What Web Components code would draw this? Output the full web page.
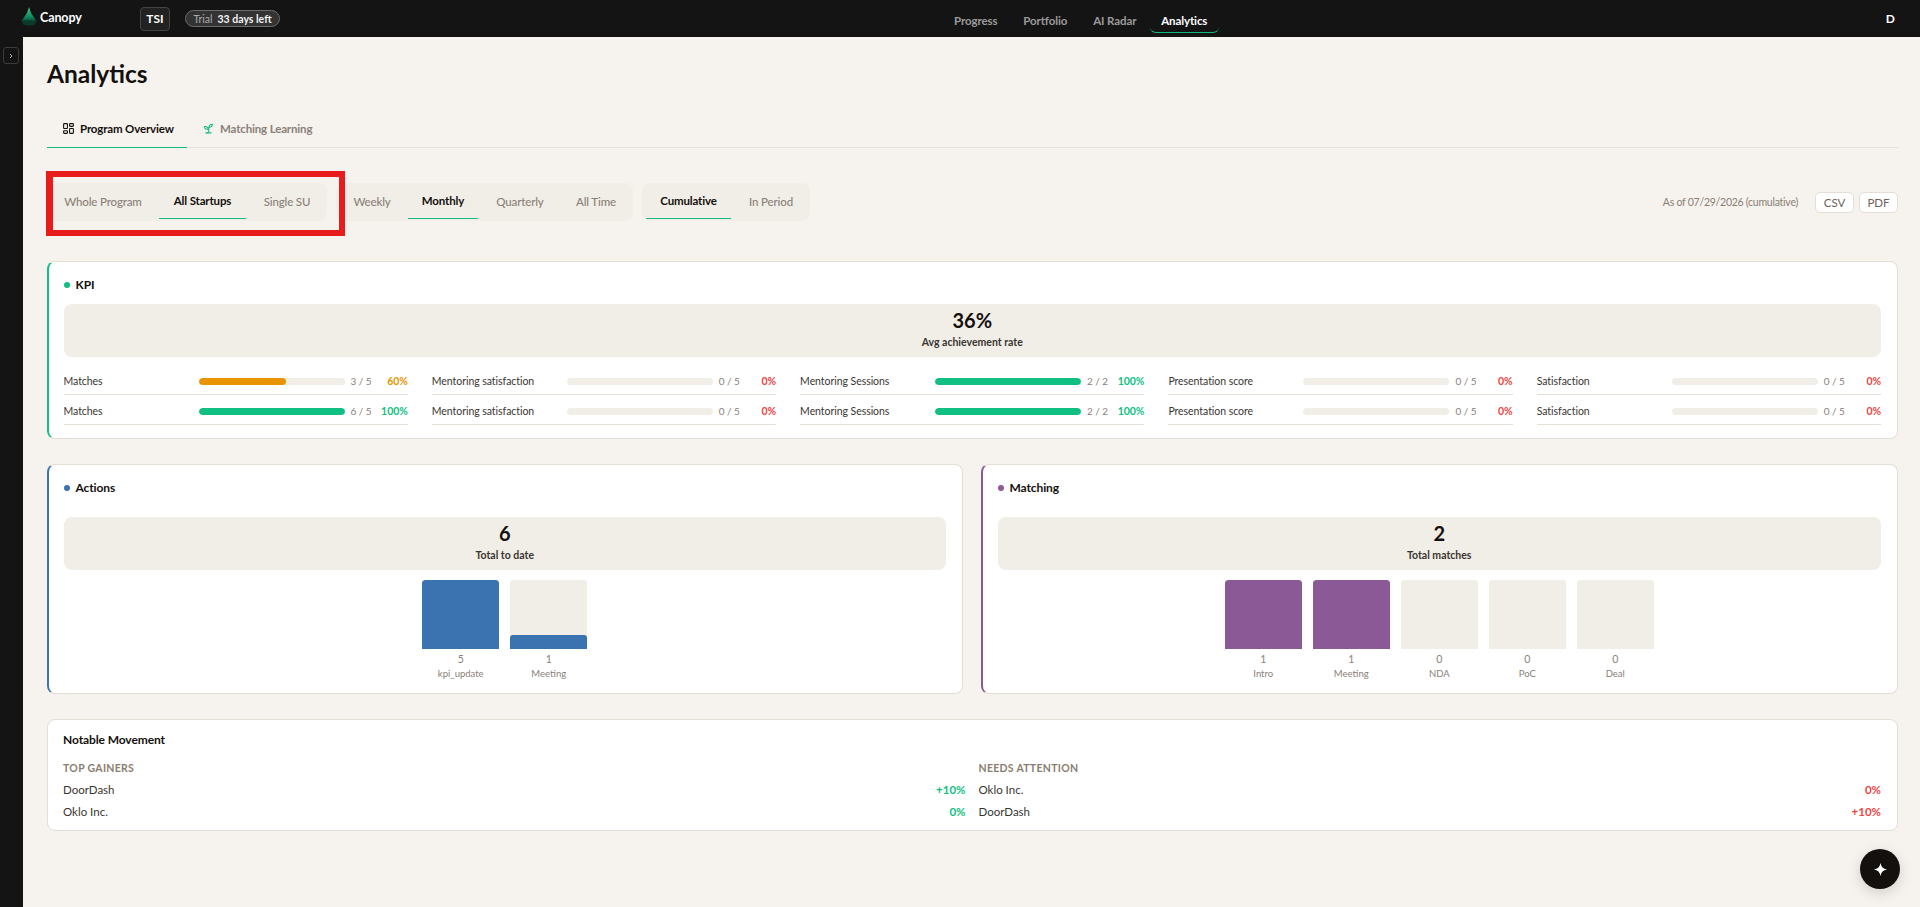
<!DOCTYPE html>
<html lang="en">
<head>
<meta charset="utf-8">
<title>Analytics</title>
<style>
  html, body { margin: 0; height: 100%; overflow: hidden; }
  body { font-family: "Lato", "Noto Sans", sans-serif; background: #141414; color: #14100d; }
</style>
</head>
<body>
<app-shell>
  <top-bar></top-bar>
  <side-rail></side-rail>
  <analytics-page></analytics-page>
  <ai-fab></ai-fab>
</app-shell>

<script>
// top level layout
class AppShell extends HTMLElement {
  constructor() {
    super();
    const shadow = this.attachShadow({ mode: "open" });
    shadow.innerHTML = `
      <style>
        :host { display: grid; grid-template-columns: 23px 1fr; grid-template-rows: 37px 870px; height: 907px; position: relative; }
        ::slotted(top-bar) { grid-column: 1 / 3; }
      </style>
      <slot></slot>
    `;
  }
}
customElements.define("app-shell", AppShell);

class TopBar extends HTMLElement {
  constructor() {
    super();
    const shadow = this.attachShadow({ mode: "open" });
    shadow.innerHTML = `
      <style>
        :host { display: flex; align-items: center; background: #141414; color: #fff; height: 37px; }
        .left { display: flex; align-items: center; padding-left: 21px; box-sizing: border-box; flex: 0 0 941px; }
        .logo { display: block; width: 16px; height: 19px; margin-top: -4px; }
        .name { font-size: 12.5px; font-weight: 700; margin: -3px 0 0 3px; width: 100px; letter-spacing: -0.1px; }
        .org { box-sizing: border-box; width: 30px; height: 24px; border: 1px solid #444; border-radius: 4px; background: #222; font-size: 12px; font-weight: 700; display: flex; align-items: center; justify-content: center; }
        .trial { box-sizing: border-box; margin-left: 15px; height: 17px; width: 95px; border: 1px solid #6b6b6b; border-radius: 9px; background: #333; font-size: 10.5px; display: flex; align-items: center; justify-content: center; gap: 5px; color: #aaa; }
        .trial b { color: #f2f2f2; font-weight: 700; }
        nav { display: flex; }
        .link { box-sizing: border-box; width: 69.5px; height: 29px; display: flex; align-items: center; justify-content: center; padding-top: 5px; margin-top: -1px; font-size: 11.5px; font-weight: 700; letter-spacing: -0.1px; color: #9b9b9b; }
        .link.on { color: #fff; border-bottom: 1.5px solid #10b981; border-radius: 0 0 6px 6px; }
        .right { margin-left: auto; padding-right: 25px; font-size: 12px; font-weight: 700; }
      </style>
      <div class="left">
        <svg class="logo" viewBox="0 0 16 19">
          <defs><linearGradient id="g" x1="0" y1="0" x2="0" y2="1">
            <stop offset="0" stop-color="#3fd08f"/><stop offset="0.7" stop-color="#0f8a5c"/><stop offset="1" stop-color="#0a4f38"/>
          </linearGradient></defs>
          <path d="M8 0 L10 6 L15.5 14 L0.5 14 L6 6 Z" fill="url(#g)"/>
          <path d="M0.5 13.5 H15.5 L14 17.5 Q8 19.6 2 17.5 Z" fill="#0b3a2a"/>
        </svg>
        <span class="name">Canopy</span>
        <span class="org">TSI</span>
        <span class="trial">Trial <b>33 days left</b></span>
      </div>
      <nav>
        <span class="link">Progress</span>
        <span class="link">Portfolio</span>
        <span class="link">AI Radar</span>
        <span class="link on">Analytics</span>
      </nav>
      <div class="right">D</div>
    `;
  }
}
customElements.define("top-bar", TopBar);

class SideRail extends HTMLElement {
  constructor() {
    super();
    const shadow = this.attachShadow({ mode: "open" });
    shadow.innerHTML = `
      <style>
        :host { display: block; background: #141414; padding: 10px 0 0 3px; }
        button { display: flex; align-items: center; justify-content: center; box-sizing: border-box; width: 16px; height: 17px; padding: 0; border: 1px solid #3c3c3c; border-radius: 3px; background: transparent; }
        svg { width: 6px; height: 6px; }
      </style>
      <button><svg viewBox="0 0 6 6" fill="none" stroke="#aaa" stroke-width="1"><path d="M2 1l2 2-2 2"/></svg></button>
    `;
  }
}
customElements.define("side-rail", SideRail);

// page content, built out of the smaller elements below
class AnalyticsPage extends HTMLElement {
  constructor() {
    super();
    const shadow = this.attachShadow({ mode: "open" });
    const row1 = [["Matches", 60, "3 / 5", "60%", "#e89400", "#e89400"], ["Mentoring satisfaction", 0, "0 / 5", "0%", "", "#ef4444"], ["Mentoring Sessions", 100, "2 / 2", "100%", "#10bf82", "#10bf82"], ["Presentation score", 0, "0 / 5", "0%", "", "#ef4444"], ["Satisfaction", 0, "0 / 5", "0%", "", "#ef4444"]];
    const row2 = [["Matches", 100, "6 / 5", "100%", "#10bf82", "#10bf82"], ["Mentoring satisfaction", 0, "0 / 5", "0%", "", "#ef4444"], ["Mentoring Sessions", 100, "2 / 2", "100%", "#10bf82", "#10bf82"], ["Presentation score", 0, "0 / 5", "0%", "", "#ef4444"], ["Satisfaction", 0, "0 / 5", "0%", "", "#ef4444"]];
    const kpi = r => `<kpi-row label="${r[0]}" fill="${r[1]}" val="${r[2]}" pct="${r[3]}" color="${r[4]}" pct-color="${r[5]}"></kpi-row>`;
    const kpiRows = row1.map(kpi).join("") + row2.map(kpi).join("");
    shadow.innerHTML = `
      <style>
        :host { display: block; background: #f6f3ee; padding: 21px 22px 0 24px; min-width: 0; overflow: hidden; }
        h1 { margin: 0; font-size: 24.5px; line-height: 32px; font-weight: 700; color: #14100d; }
        .controls { position: relative; display: flex; align-items: center; gap: 9px; margin-top: 35px; }
        .meta { margin-left: auto; display: flex; align-items: center; font-size: 10.5px; letter-spacing: -0.25px; color: #8a7d70; }
        .btn { box-sizing: border-box; height: 21px; width: 39px; background: #fff; border: 1px solid #e4ded4; border-radius: 5px; font-size: 11.5px; letter-spacing: 0; color: #6b6258; display: flex; align-items: center; justify-content: center; margin-left: 5px; }
        .btn.first { margin-left: 17px; }
        .redbox { position: absolute; left: -1px; top: -12px; width: 299px; height: 65px; box-sizing: border-box; border: 6px solid #e81c1c; border-left-width: 7px; }
        .kpis { display: grid; grid-template-columns: repeat(5, 1fr); column-gap: 24px; margin-top: 8px; }
        .two { display: grid; grid-template-columns: 916px 917px; column-gap: 18px; margin-top: 25px; }
        .bars { display: flex; justify-content: center; gap: 11px; margin-top: 10px; }
        .first-card { margin-top: 40px; }
        .movers { display: grid; grid-template-columns: 1fr 1fr; column-gap: 13px; margin-top: 13px; }
      </style>
      <h1>Analytics</h1>
      <tab-strip></tab-strip>
      <div class="controls">
        <seg-group items="Whole Program|All Startups|Single SU" active="1" widths="104|87|74"></seg-group>
        <seg-group items="Weekly|Monthly|Quarterly|All Time" active="1" widths="64|70|76|68"></seg-group>
        <seg-group items="Cumulative|In Period" active="0" widths="85|72"></seg-group>
        <div class="meta">
          <span>As of 07/29/2026 (cumulative)</span>
          <span class="btn first">CSV</span>
          <span class="btn">PDF</span>
        </div>
        <div class="redbox"></div>
      </div>

      <kpi-card class="first-card" accent="#10bf82" heading="KPI" gap="11">
        <stat-box value="36%" label="Avg achievement rate"></stat-box>
        <div class="kpis">${kpiRows}</div>
      </kpi-card>

      <div class="two">
        <kpi-card accent="#3b72b0" heading="Actions" gap="21">
          <stat-box value="6" label="Total to date"></stat-box>
          <div class="bars">
            <chart-bar fill="100" color="#3b72b0" val="5" label="kpi_update"></chart-bar>
            <chart-bar fill="20" color="#3b72b0" val="1" label="Meeting"></chart-bar>
          </div>
        </kpi-card>
        <kpi-card accent="#8b5a96" heading="Matching" gap="21">
          <stat-box value="2" label="Total matches"></stat-box>
          <div class="bars">
            <chart-bar fill="100" color="#8b5a96" val="1" label="Intro"></chart-bar>
            <chart-bar fill="100" color="#8b5a96" val="1" label="Meeting"></chart-bar>
            <chart-bar fill="0" color="#8b5a96" val="0" label="NDA"></chart-bar>
            <chart-bar fill="0" color="#8b5a96" val="0" label="PoC"></chart-bar>
            <chart-bar fill="0" color="#8b5a96" val="0" label="Deal"></chart-bar>
          </div>
        </kpi-card>
      </div>

      <kpi-card heading="Notable Movement" plain gap="0" style="margin-top:25px">
        <div class="movers">
          <mover-list heading="TOP GAINERS" rows="DoorDash:+10%:#10bf82|Oklo Inc.:0%:#10bf82"></mover-list>
          <mover-list heading="NEEDS ATTENTION" rows="Oklo Inc.:0%:#ef4444|DoorDash:+10%:#ef4444"></mover-list>
        </div>
      </kpi-card>
    `;
  }
}

class TabStrip extends HTMLElement {
  constructor() {
    super();
    const shadow = this.attachShadow({ mode: "open" });
    shadow.innerHTML = `
      <style>
        :host { display: flex; margin-top: 19px; border-bottom: 1px solid #e6e0d6; height: 38px; font-size: 11.5px; font-weight: 700; letter-spacing: -0.15px; }
        .tab { display: flex; align-items: center; gap: 5px; box-sizing: border-box; height: 39px; }
        .tab.on { width: 140px; padding-left: 15px; color: #14100d; border-bottom: 1.5px solid #10b981; }
        .tab.off { padding-left: 15px; color: #8a8078; }
        svg { width: 13px; height: 13px; fill: none; stroke-width: 2; stroke-linecap: round; stroke-linejoin: round; }
      </style>
      <div class="tab on">
        <svg viewBox="0 0 24 24" stroke="#14100d"><rect x="3" y="3" width="7" height="9" rx="1"/><rect x="14" y="3" width="7" height="5" rx="1"/><rect x="14" y="12" width="7" height="9" rx="1"/><rect x="3" y="16" width="7" height="5" rx="1"/></svg>
        Program Overview
      </div>
      <div class="tab off">
        <svg viewBox="0 0 24 24" stroke="#10b981"><path d="M7 20h10"/><path d="M10 20c5.5-2.5.8-6.4 3-10"/><path d="M9.5 9.4c1.1.8 1.8 2.2 2.3 3.7-2 .4-3.5.4-4.8-.3-1.2-.6-2.3-1.9-3-4.2 2.8-.5 4.4 0 5.5.8z"/><path d="M14.1 6a7 7 0 0 0-1.1 4c1.9-.1 3.3-.6 4.3-1.4 1-1 1.6-2.3 1.7-4.6-2.7.1-4 1-4.9 2z"/></svg>
        Matching Learning
      </div>
    `;
  }
}

class SegGroup extends HTMLElement {
  constructor() {
    super();
    const shadow = this.attachShadow({ mode: "open" });
    const items = this.getAttribute("items").split("|");
    const widths = this.getAttribute("widths").split("|");
    const active = Number(this.getAttribute("active"));
    shadow.innerHTML = `
      <style>
        :host { display: flex; gap: 4px; padding: 0 3px 0 4px; height: 38px; background: #f1eee7; border-radius: 8px; font-size: 11.5px; font-weight: 500; letter-spacing: -0.15px; color: #8a8078; }
        .item { box-sizing: border-box; height: 36px; display: flex; align-items: center; justify-content: center; white-space: nowrap; }
        .item.on { color: #14100d; font-weight: 700; border-bottom: 1.5px solid #10bf82; }
      </style>
      ${items.map((t, i) => `<div class="item${i === active ? " on" : ""}" style="width:${widths[i]}px">${t}</div>`).join("")}
    `;
  }
}

class KpiCard extends HTMLElement {
  constructor() {
    super();
    const shadow = this.attachShadow({ mode: "open" });
    const accent = this.getAttribute("accent");
    const plain = this.hasAttribute("plain");
    shadow.innerHTML = `
      <style>
        :host { display: block; box-sizing: border-box; background: #fff; border: 1px solid #e4ded4; border-radius: 8px; ${plain ? "padding: 12px 16px 8px 15px;" : `border-left: 2.5px solid ${accent}; padding: 15px 16px 13px 14.5px;`} }
        .head { display: flex; align-items: center; gap: 6px; font-size: 12px; font-weight: 700; line-height: 16px; letter-spacing: -0.1px; color: #14100d; }
        .dot { width: 6px; height: 6px; border-radius: 50%; background: ${accent}; }
        .body { margin-top: ${this.getAttribute("gap")}px; }
      </style>
      <div class="head">${plain ? "" : '<span class="dot"></span>'}${this.getAttribute("heading")}</div>
      <div class="body"><slot></slot></div>
    `;
  }
}

class StatBox extends HTMLElement {
  constructor() {
    super();
    const shadow = this.attachShadow({ mode: "open" });
    shadow.innerHTML = `
      <style>
        :host { display: block; box-sizing: border-box; height: 53px; background: #f1eee7; border-radius: 8px; text-align: center; padding-top: 4px; color: #14100d; }
        .v { font-size: 20px; font-weight: 700; line-height: 24px; }
        .l { font-size: 10.5px; font-weight: 700; line-height: 14px; margin-top: 3px; color: #3a3530; }
      </style>
      <div class="v">${this.getAttribute("value")}</div>
      <div class="l">${this.getAttribute("label")}</div>
    `;
  }
}

class KpiRow extends HTMLElement {
  constructor() {
    super();
    const shadow = this.attachShadow({ mode: "open" });
    const color = this.getAttribute("color");
    shadow.innerHTML = `
      <style>
        :host { display: grid; grid-template-columns: 135px 146px 27px 1fr; align-items: center; box-sizing: border-box; height: 30px; padding-top: 3px; border-bottom: 1px solid #e4ded4; font-size: 10.5px; letter-spacing: -0.05px; color: #3a3530; }
        .track { height: 7px; border-radius: 4px; background: #f1eee7; overflow: hidden; }
        .fill { height: 100%; border-radius: 4px; background: ${color || "transparent"}; width: ${this.getAttribute("fill")}%; }
        .val { color: #8a8078; text-align: right; font-size: 10px; }
        .pct { text-align: right; font-weight: 700; color: ${this.getAttribute("pct-color")}; }
      </style>
      <span>${this.getAttribute("label")}</span>
      <div class="track"><div class="fill"></div></div>
      <span class="val">${this.getAttribute("val")}</span>
      <span class="pct">${this.getAttribute("pct")}</span>
    `;
  }
}

class ChartBar extends HTMLElement {
  constructor() {
    super();
    const shadow = this.attachShadow({ mode: "open" });
    shadow.innerHTML = `
      <style>
        :host { display: block; width: 77px; text-align: center; font-size: 9.5px; color: #8a8078; }
        .box { display: flex; align-items: flex-end; height: 69px; background: #f1eee7; border-radius: 3px 3px 0 0; overflow: hidden; }
        .fill { width: 100%; height: ${this.getAttribute("fill")}%; background: ${this.getAttribute("color")}; border-radius: 3px 3px 0 0; }
        .v { font-size: 10.5px; line-height: 14px; margin-top: 3px; }
        .l { line-height: 13px; margin-top: 1px; }
      </style>
      <div class="box"><div class="fill"></div></div>
      <div class="v">${this.getAttribute("val")}</div>
      <div class="l">${this.getAttribute("label")}</div>
    `;
  }
}

class MoverList extends HTMLElement {
  constructor() {
    super();
    const shadow = this.attachShadow({ mode: "open" });
    const rows = this.getAttribute("rows").split("|").map(r => r.split(":"));
    shadow.innerHTML = `
      <style>
        :host { display: block; font-size: 11.5px; color: #3a3530; }
        .h { font-size: 10.5px; font-weight: 700; letter-spacing: 0.3px; color: #8a7d70; line-height: 14px; margin-bottom: 3px; }
        .r { display: flex; justify-content: space-between; align-items: center; height: 22px; }
        b { font-weight: 700; }
      </style>
      <div class="h">${this.getAttribute("heading")}</div>
      ${rows.map(r => `<div class="r"><span>${r[0]}</span><b style="color:${r[2]}">${r[1]}</b></div>`).join("")}
    `;
  }
}

class AiFab extends HTMLElement {
  constructor() {
    super();
    const shadow = this.attachShadow({ mode: "open" });
    shadow.innerHTML = `
      <style>
        :host { position: absolute; left: 1860px; top: 849px; width: 40px; height: 40px; border-radius: 50%; background: #14100d; box-shadow: 0 4px 14px rgba(0,0,0,.15); display: flex; align-items: center; justify-content: center; }
        svg { width: 13px; height: 13px; }
      </style>
      <svg viewBox="0 0 12 12"><path d="M6 0 C6.5 3.5 8.5 5.5 12 6 C8.5 6.5 6.5 8.5 6 12 C5.5 8.5 3.5 6.5 0 6 C3.5 5.5 5.5 3.5 6 0 Z" fill="#fff"/></svg>
    `;
  }
}

// children first so the attributes are there when page html gets parsed
customElements.define("tab-strip", TabStrip);
customElements.define("seg-group", SegGroup);
customElements.define("kpi-card", KpiCard);
customElements.define("stat-box", StatBox);
customElements.define("kpi-row", KpiRow);
customElements.define("chart-bar", ChartBar);
customElements.define("mover-list", MoverList);
customElements.define("ai-fab", AiFab);
customElements.define("analytics-page", AnalyticsPage);
</script>
</body>
</html>
